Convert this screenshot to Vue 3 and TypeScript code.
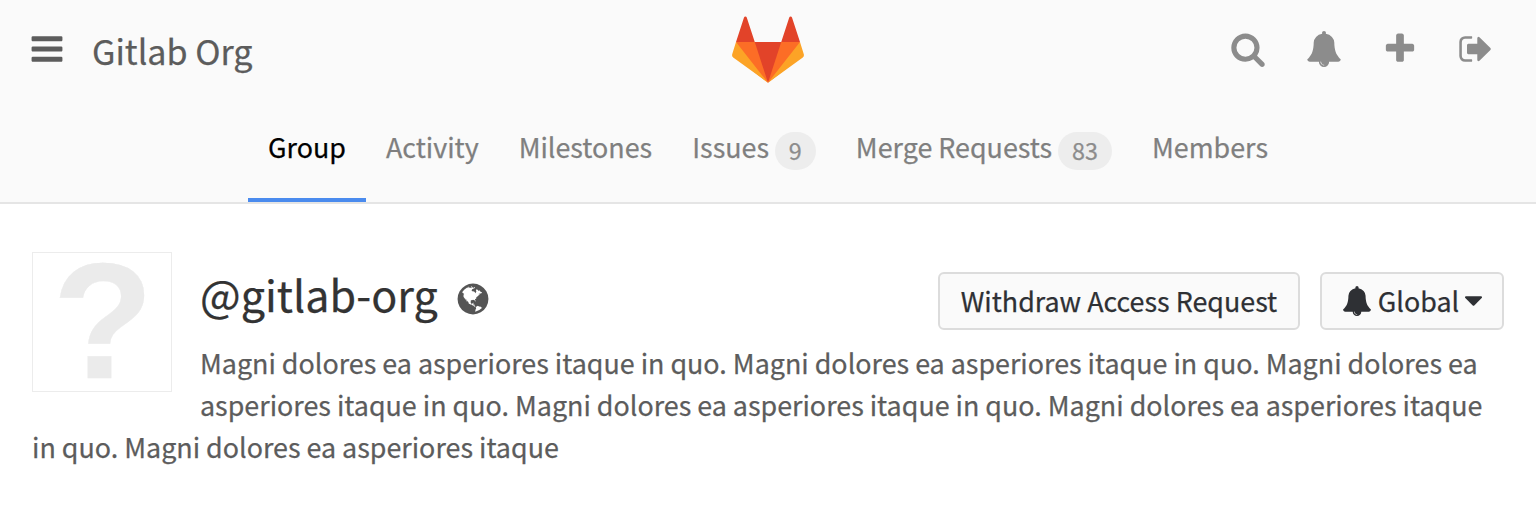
<script setup lang="ts">
interface Tab {
  label: string
  count?: number
  active?: boolean
}

const tabs: Tab[] = [
  { label: 'Group', active: true },
  { label: 'Activity' },
  { label: 'Milestones' },
  { label: 'Issues', count: 9 },
  { label: 'Merge Requests', count: 83 },
  { label: 'Members' },
]

const bell =
  'M912 1696q0-16-16-16-59 0-101.5-42.5t-42.5-101.5q0-16-16-16t-16 16q0 73 51.5 124.5t124.5 51.5q16 0 16-16zm816-288q0 52-38 90t-90 38h-448q0 106-75 181t-181 75-181-75-75-181h-448q-52 0-90-38t-38-90q50-42 91-88t85-119.5 74.5-158.5 50-206 19.5-260q0-152 117-282.5t307-158.5q-8-19-8-39 0-40 28-68t68-28 68 28 28 68q0 20-8 39 190 28 307 158.5t117 282.5q0 139 19.5 260t50 206 74.5 158.5 85 119.5 91 88z'

const actions: { name: string; path: string }[] = [
  {
    name: 'Search',
    path: 'M1216 832q0-185-131.5-316.5t-316.5-131.5-316.5 131.5-131.5 316.5 131.5 316.5 316.5 131.5 316.5-131.5 131.5-316.5zm512 832q0 52-38 90t-90 38q-54 0-90-38l-343-342q-179 124-399 124-143 0-273.5-55.5t-225-150-150-225-55.5-273.5 55.5-273.5 150-225 225-150 273.5-55.5 273.5 55.5 225 150 150 225 55.5 273.5q0 220-124 399l343 343q37 37 37 90z',
  },
  { name: 'Todos', path: bell },
  {
    name: 'New project',
    path: 'M1600 736v192q0 40-28 68t-68 28h-416v416q0 40-28 68t-68 28h-192q-40 0-68-28t-28-68v-416h-416q-40 0-68-28t-28-68v-192q0-40 28-68t68-28h416v-416q0-40 28-68t68-28h192q40 0 68 28t28 68v416h416q40 0 68 28t28 68z',
  },
  {
    name: 'Sign out',
    path: 'M704 1440q0 4 1 20t.5 26.5-3 23.5-10 19.5-20.5 6.5h-320q-119 0-203.5-84.5t-84.5-203.5v-704q0-119 84.5-203.5t203.5-84.5h320q13 0 22.5 9.5t9.5 22.5q0 4 1 20t.5 26.5-3 23.5-10 19.5-20.5 6.5h-320q-66 0-113 47t-47 113v704q0 66 47 113t113 47h312l11.5 1 11.5 3 8 5.5 7 9 2 13.5zm928-544q0 26-19 45l-544 544q-19 19-45 19t-45-19-19-45v-288h-448q-26 0-45-19t-19-45v-384q0-26 19-45t45-19h448v-288q0-26 19-45t45-19 45 19l544 544q19 19 19 45z',
  },
]

const description =
  'Magni dolores ea asperiores itaque in quo. Magni dolores ea asperiores itaque in quo. Magni dolores ea asperiores itaque in quo. Magni dolores ea asperiores itaque in quo. Magni dolores ea asperiores itaque in quo. Magni dolores ea asperiores itaque'
</script>

<template>
  <div class="page">
    <header class="header">
      <div class="topbar">
        <div class="side">
          <svg class="icon menu" viewBox="0 0 1792 1792">
            <path d="M1664 1344v128q0 26-19 45t-45 19h-1408q-26 0-45-19t-19-45v-128q0-26 19-45t45-19h1408q26 0 45 19t19 45zm0-512v128q0 26-19 45t-45 19h-1408q-26 0-45-19t-19-45v-128q0-26 19-45t45-19h1408q26 0 45 19t19 45zm0-512v128q0 26-19 45t-45 19h-1408q-26 0-45-19t-19-45v-128q0-26 19-45t45-19h1408q26 0 45 19t19 45z" />
          </svg>
          <span class="title">Gitlab Org</span>
        </div>
        <svg class="logo" viewBox="0 0 36 36">
          <path fill="#e24329" d="M2 14l9.38 9v-9l-4-12.28c-.205-.632-1.176-.632-1.38 0z" />
          <path fill="#e24329" d="M34 14l-9.38 9v-9l4-12.28c.205-.632 1.176-.632 1.38 0z" />
          <path fill="#e24329" d="M18 34.38L3 14h30z" />
          <path fill="#fc6d26" d="M18 34.38L11.38 14H2l4 11z" />
          <path fill="#fc6d26" d="M18 34.38L24.62 14H34l-4 11z" />
          <path fill="#fca326" d="M2 14L.1 20.16c-.18.565 0 1.2.5 1.56L18 34.38z" />
          <path fill="#fca326" d="M34 14l1.9 6.16c.18.565 0 1.2-.5 1.56L18 34.38z" />
        </svg>
        <div class="side actions">
          <svg v-for="a in actions" :key="a.name" class="icon" viewBox="0 0 1792 1792" :aria-label="a.name">
            <path :d="a.path" />
          </svg>
        </div>
      </div>
      <nav class="tabs">
        <a v-for="t in tabs" :key="t.label" class="tab" :class="{ active: t.active }">
          <span>{{ t.label }}</span>
          <span v-if="t.count" class="badge">{{ t.count }}</span>
        </a>
      </nav>
    </header>

    <main class="content">
      <div class="avatar"><span>?</span></div>
      <div class="group-row">
        <h1 class="group-name">@gitlab-org</h1>
        <svg class="icon globe" viewBox="0 0 1792 1792">
          <path d="M896 128q209 0 385.5 103t279.5 279.5 103 385.5-103 385.5-279.5 279.5-385.5 103-385.5-103-279.5-279.5-103-385.5 103-385.5 279.5-279.5 385.5-103zm274 521q-2 1-9.5 9.5t-13.5 9.5q2 0 4.5-5t5-11 3.5-7q6-7 22-15 14-6 52-12 34-8 51 11-2-2 9.5-13t14.5-12q3-2 15-4.5t15-7.5l2-22q-12 1-17.5-7t-6.5-21q0 2-6 8 0-7-4.5-8t-11.5 1-9 1q-10-3-15-7.5t-8-16.5-4-15q-2-5-9.5-11t-9.5-10q-1-2-2.5-5.5t-3-6.5-4-5.5-5.5-2.5-7 5-7.5 10-4.5 5q-3-2-6-1.5t-4.5 1-4.5 3-5 3.5q-3 2-8.5 3t-8.5 2q15-5-1-11-10-4-16-3 9-4 7.5-12t-8.5-14h5q-1-4-8.5-8.5t-17.5-8.5-13-6q-8-5-34-9.5t-33-.5q-5 6-4.5 10.5t4 14 3.5 12.5q1 6-5.5 13t-6.5 12q0 7 14 15.5t10 21.5q-3 8-16 16t-16 12q-5 8-1.5 18.5t10.5 16.5q2 2 1.5 4t-3.5 4.5-5.5 4-6.5 3.5l-3 2q-11 5-20.5-6t-13.5-26q-7-25-16-30-23-8-29 1-5-13-41-26-25-9-58-4 6-1 0-15-7-15-19-12 3-6 4-17.5t1-13.5q3-13 12-23 1-1 7-8.5t9.5-13.5.5-6q35 4 50-11 5-5 11.5-17t10.5-17q9-6 14-5.5t14.5 5.5 14.5 5q14 1 15.5-11t-7.5-20q12 1 3-17-4-7-8-9-12-4-27 5-8 4 2 8-1-1-9.5 10.5t-16.5 17.5-16-5q-1-1-5.5-13.5t-9.5-13.5q-8 0-16 15 3-8-11-15t-24-8q19-12-8-27-7-4-20.5-5t-19.5 4q-5 7-5.5 11.5t5 8 10.5 5.5 11.5 4 8.5 3q14 10 8 14-2 1-8.5 3.5t-11.5 4.5-6 4q-3 4 0 14t-2 14q-5-5-9-17.5t-7-16.5q7 9-25 6l-10-1q-4 0-16 2t-20.5 1-13.5-8q-4-8 0-20 1-4 4-2-4-3-11-9.5t-10-8.5q-46 15-94 41 6 1 12-1 5-2 13-6.5t10-5.5q34-14 42-7l5-5q14 16 20 25-7-4-30-1-20 6-22 12 7 12 5 18-4-3-11.5-10t-14.5-11-15-5q-16 0-22 1-146 80-235 222 7 7 12 8 4 1 5 9t2.5 11 11.5-3q9 8 3 19 1-1 44 27 19 17 21 21 3 11-10 18-1-2-9-9t-9-4q-3 5 .5 18.5t10.5 12.5q-7 0-9.5 16t-2.5 35.5-1 23.5l2 1q-3 12 5.5 34.5t21.5 19.5q-13 3 20 43 6 8 8 9 3 2 12 7.5t15 10 10 10.5q4 5 10 22.5t14 23.5q-2 6 9.5 20t10.5 23q-1 0-2.5 1t-2.5 1q3 7 15.5 14t15.5 13q1 3 2 10t3 11 8 2q2-20-24-62-15-25-17-29-3-5-5.5-15.5t-4.5-14.5q2 0 6 1.5t8.5 3.5 7.5 4 2 3q-3 7 2 17.5t12 18.5 17 19 12 13q6 6 14 19.5t0 13.5q9 0 20 10.5t17 19.5q5 8 8 26t5 24q2 7 8.5 13.5t12.5 9.5l16 8 13 7q5 2 18.5 10.5t21.5 11.5q10 4 16 4t14.5-2.5 13.5-3.5q15-2 29 15t21 21q36 19 55 11-2 1 .5 7.5t8 15.5 9 14.5 5.5 8.5q5 6 18 15t18 15q6-4 7-9-3 8 7 20t18 10q14-3 14-32-31 15-49-18 0-1-2.5-5.5t-4-8.5-2.5-8.5 0-7.5 5-3q9 0 10-3.5t-2-12.5-4-13q-1-8-11-20t-12-15q-5 9-16 8t-16-9q0 1-1.5 5.5t-1.5 6.5q-13 0-15-1 1-3 2.5-17.5t3.5-22.5q1-4 5.5-12t7.5-14.5 4-12.5-4.5-9.5-17.5-2.5q-19 1-26 20-1 3-3 10.5t-5 11.5-9 7q-7 3-24 2t-24-5q-13-8-22.5-29t-9.5-37q0-10 2.5-26.5t3-25-5.5-24.5q3-2 9-9.5t10-10.5q2-1 4.5-1.5t4.5 0 4-1.5 3-6q-1-1-4-3-3-3-4-3 7 3 28.5-1.5t27.5 1.5q15 11 22-2 0-1-2.5-9.5t-.5-13.5q5 27 29 9 3 3 15.5 5t17.5 5q3 2 7 5.5t5.5 4.5 5-.5 8.5-6.5q10 14 12 24 11 40 19 44 7 3 11 2t4.5-9.5 0-14-1.5-12.5l-1-8v-18l-1-8q-15-3-18.5-12t1.5-18.5 15-18.5q1-1 8-3.5t15.5-6.5 12.5-8q21-19 15-35 7 0 11-9-1 0-5-3t-7.5-5-4.5-2q9-5 2-16 5-3 7.5-11t7.5-10q9 12 21 2 7-8 1-16 5-7 20.5-10.5t18.5-9.5q7 2 8-2t1-12 3-12q4-5 15-9t13-5l17-11q3-4 0-4 18 2 31-11 10-11-6-20 3-6-3-9.5t-15-5.5q3-1 11.5-.5t10.5-1.5q15-10-7-16-17-5-43 12zm-163 877q206-36 351-189-3-3-12.5-4.5t-12.5-3.5q-18-7-24-8 1-7-2.5-13t-8-9-12.5-8-11-7q-2-2-7-6t-7-5.5-7.5-4.5-8.5-2-10 1l-3 1q-3 1-5.5 2.5t-5.5 3-4 3 0 2.5q-21-17-36-22-5-1-11-5.5t-10.5-7-10-1.5-11.5 7q-5 5-6 15t-2 13q-7-5 0-17.5t2-18.5q-3-6-10.5-4.5t-12 4.5-11.5 8.5-9 6.5-8.5 5.5-8.5 7.5q-3 4-6 12t-5 11q-2-4-11.5-6.5t-9.5-5.5q2 10 4 35t5 38q7 31-12 48-27 25-29 40-4 22 12 26 0 7-8 20.5t-7 21.5q0 6 2 16z" />
        </svg>
        <div class="buttons">
          <button class="btn withdraw">Withdraw Access Request</button>
          <button class="btn notify">
            <svg class="small-icon" viewBox="0 0 1792 1792"><path :d="bell" /></svg>
            <span>Global</span>
            <svg class="caret" viewBox="384 640 1024 576">
              <path d="M1408 704q0 26-19 45l-448 448q-19 19-45 19t-45-19l-448-448q-19-19-19-45t19-45 45-19h896q26 0 45 19t19 45z" />
            </svg>
          </button>
        </div>
      </div>
      <p class="description">{{ description }}</p>
    </main>
  </div>
</template>

<style>
body {
  background: #fff;
}
</style>

<style scoped>
.page {
  box-sizing: border-box;
  height: 516px;
  overflow: hidden;
  font-family: 'Noto Sans CJK JP', 'Noto Sans', sans-serif;
  font-size: 26.86px;
  line-height: 42px;
  color: #5c5c5c;
  -webkit-text-stroke: 0.25px currentColor;
}
.header {
  box-sizing: border-box;
  height: 204px;
  background: #fafafa;
  border-bottom: 2px solid #e5e5e5;
  display: flex;
  flex-direction: column;
}
.topbar {
  box-sizing: border-box;
  height: 98px;
  padding: 0 29px;
  display: grid;
  grid-template-columns: 1fr 72px 1fr;
  align-items: center;
}
.side {
  display: flex;
  align-items: center;
  height: 98px;
}
.icon {
  width: 36px;
  height: 36px;
  flex: none;
  display: block;
  fill: currentColor;
}
.menu {
  margin-left: 0.4px;
}
.title {
  margin: 1px 0 0 26.6px;
  font-size: 34.1px;
  line-height: 50px;
}
.logo {
  width: 72px;
  height: 72px;
  display: block;
  margin-top: 2px;
}
.actions {
  justify-content: flex-end;
  gap: 40px;
  padding-right: 13px;
  color: #8c8c8c;
}
.tabs {
  display: flex;
  justify-content: center;
  height: 104px;
}
.tab {
  box-sizing: border-box;
  display: flex;
  padding: 28px 20px 0;
  height: 104px;
  color: #7f7f7f;
}
.tab.active {
  color: #000;
  border-bottom: 4px solid #4a8bee;
}
.badge {
  box-sizing: border-box;
  height: 38px;
  margin: 6px 0 0 5.6px;
  padding: 0 14.2px;
  border-radius: 19px;
  background: #ededed;
  color: #8c8c8c;
  font-size: 23.3px;
  line-height: 37px;
}
.content {
  padding: 48px 32px 0;
}
.avatar {
  float: left;
  box-sizing: border-box;
  width: 140px;
  height: 140px;
  margin-right: 28px;
  padding-left: 2px;
  border: 1px solid #ececec;
  background: #fff;
  color: #ebebeb;
  font: bold 166px/136px 'Liberation Sans', Arial, sans-serif;
  text-align: center;
  overflow: hidden;
}
.group-row {
  display: flex;
  height: 90px;
  align-items: flex-start;
}
.group-name {
  margin: 13px 0 0;
  font-size: 43px;
  line-height: 56px;
  font-weight: 400;
  color: #333;
}
.globe {
  margin: 29px 0 0 17px;
  color: #555;
}
.buttons {
  margin: 20px 0 0 auto;
  display: flex;
  gap: 20px;
}
.btn {
  box-sizing: border-box;
  height: 58px;
  padding: 0;
  border: 2px solid #dcdcdc;
  border-radius: 6px;
  background: #fafafa;
  color: #2e3034;
  font: inherit;
  line-height: 54px;
  display: flex;
  align-items: center;
  justify-content: center;
  white-space: nowrap;
  -webkit-text-stroke: inherit;
  -webkit-text-stroke-color: currentColor;
}
.withdraw {
  width: 362px;
}
.notify {
  width: 184px;
}
.small-icon {
  width: 30px;
  height: 30px;
  margin-right: 6px;
  fill: currentColor;
}
.caret {
  width: 17px;
  height: 10px;
  margin-left: 6px;
  fill: currentColor;
}
.description {
  margin: 0;
}
</style>
